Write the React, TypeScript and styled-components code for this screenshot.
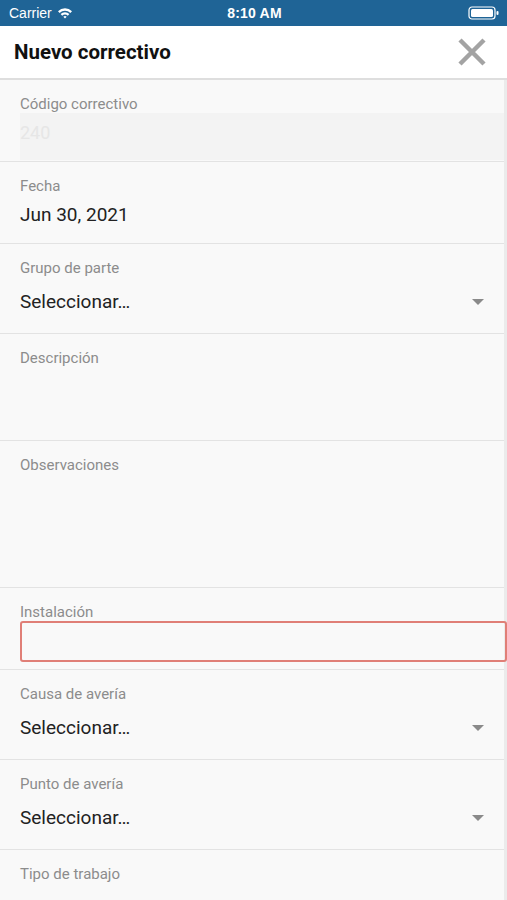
import React from 'react';
import styled, { createGlobalStyle } from 'styled-components';

const GlobalStyle = createGlobalStyle`
  html, body {
    margin: 0;
    padding: 0;
    background: #f9f9f9;
    font-family: Roboto, "Liberation Sans", Arial, sans-serif;
  }
`;

const Page = styled.div`
  width: 507px;
  height: 900px;
  overflow: hidden;
  display: flex;
  flex-direction: column;
  background: #f9f9f9;
`;

const StatusBar = styled.div`
  height: 26px;
  flex-shrink: 0;
  background: #1f6496;
  color: #fff;
  display: grid;
  grid-template-columns: 1fr auto 1fr;
  align-items: center;
  padding: 0 7px 0 9px;
  font-family: "Liberation Sans", Arial, sans-serif;
  font-size: 14px;
`;

const Carrier = styled.div`
  display: flex;
  align-items: center;
  gap: 5px;
`;

const Clock = styled.div`
  font-weight: 700;
  letter-spacing: 0.2px;
`;

const Battery = styled.div`
  justify-self: end;
  display: flex;
  align-items: center;
`;

const Header = styled.div`
  height: 52px;
  flex-shrink: 0;
  background: #fff;
  border-bottom: 2px solid #dedede;
  display: flex;
  align-items: center;
  justify-content: space-between;
  padding: 0 20px 0 14px;
`;

const Title = styled.h1`
  margin: 0;
  font-size: 20.5px;
  font-weight: 700;
  color: #111;
`;

const Form = styled.div`
  flex-shrink: 0;
  border-right: 3px solid #ebebeb;
  display: flex;
  flex-direction: column;
`;

const Field = styled.div<{ $h: number }>`
  height: ${p => p.$h}px;
  flex-shrink: 0;
  box-sizing: border-box;
  border-bottom: 1px solid #e3e3e3;
  padding: 15px 0 0 20px;
  display: flex;
  flex-direction: column;
`;

const Label = styled.div`
  font-size: 15px;
  line-height: 18px;
  color: #8c8c8c;
`;

const Value = styled.div<{ $gap: number }>`
  margin-top: ${p => p.$gap}px;
  font-size: 19px;
  line-height: 23px;
  color: #222;
  display: flex;
  align-items: center;
  justify-content: space-between;
  padding-right: 20px;
`;

const Caret = styled.span`
  width: 0;
  height: 0;
  border-left: 6px solid transparent;
  border-right: 6px solid transparent;
  border-top: 6px solid #8a8a8a;
`;

const DisabledBox = styled.div`
  height: 47px;
  background: #f3f3f3;
  color: #e6e6e6;
  font-size: 18px;
  display: flex;
  align-items: center;
  padding-bottom: 8px;
  box-sizing: border-box;
`;

const ErrorBox = styled.div`
  height: 41px;
  box-sizing: border-box;
  border: 2px solid #e07f77;
  border-radius: 3px;
  margin-right: -3px;
`;

const Select = ({ label }: { label: string }) => (
  <Field $h={90}>
    <Label>{label}</Label>
    <Value $gap={13}>
      Seleccionar…
      <Caret />
    </Value>
  </Field>
);

export default function App() {
  return (
    <Page>
      <GlobalStyle />
      <StatusBar>
        <Carrier>
          Carrier
          <svg width="16" height="12" viewBox="0 0 16 12">
            <path d="M1 4.2 A10 10 0 0 1 15 4.2 L13.4 5.9 A7.6 7.6 0 0 0 2.6 5.9 Z" fill="#fff" />
            <path d="M3.6 7 A6.2 6.2 0 0 1 12.4 7 L10.8 8.7 A3.9 3.9 0 0 0 5.2 8.7 Z" fill="#fff" />
            <path d="M6.3 9.8 A2.4 2.4 0 0 1 9.7 9.8 L8 11.6 Z" fill="#fff" />
          </svg>
        </Carrier>
        <Clock>8:10 AM</Clock>
        <Battery>
          <svg width="32" height="14" viewBox="0 0 32 14">
            <rect x="1" y="1" width="26" height="12" rx="3" fill="none" stroke="#fff" strokeWidth="1.2" />
            <rect x="3" y="3" width="22" height="8" rx="1.5" fill="#fff" />
            <rect x="28.5" y="5" width="2" height="4" rx="1" fill="#fff" />
          </svg>
        </Battery>
      </StatusBar>
      <Header>
        <Title>Nuevo correctivo</Title>
        <svg width="30" height="30" viewBox="0 0 30 30">
          <path d="M3 3 L27 27 M27 3 L3 27" stroke="#a3a3a3" strokeWidth="4.5" strokeLinecap="butt" />
        </svg>
      </Header>
      <Form>
        <Field $h={82}>
          <Label>Código correctivo</Label>
          <DisabledBox>240</DisabledBox>
        </Field>
        <Field $h={82}>
          <Label>Fecha</Label>
          <Value $gap={8}>Jun 30, 2021</Value>
        </Field>
        <Select label="Grupo de parte" />
        <Field $h={107}>
          <Label>Descripción</Label>
        </Field>
        <Field $h={147}>
          <Label>Observaciones</Label>
        </Field>
        <Field $h={82}>
          <Label>Instalación</Label>
          <ErrorBox />
        </Field>
        <Select label="Causa de avería" />
        <Select label="Punto de avería" />
        <Field $h={60}>
          <Label>Tipo de trabajo</Label>
        </Field>
      </Form>
    </Page>
  );
}
